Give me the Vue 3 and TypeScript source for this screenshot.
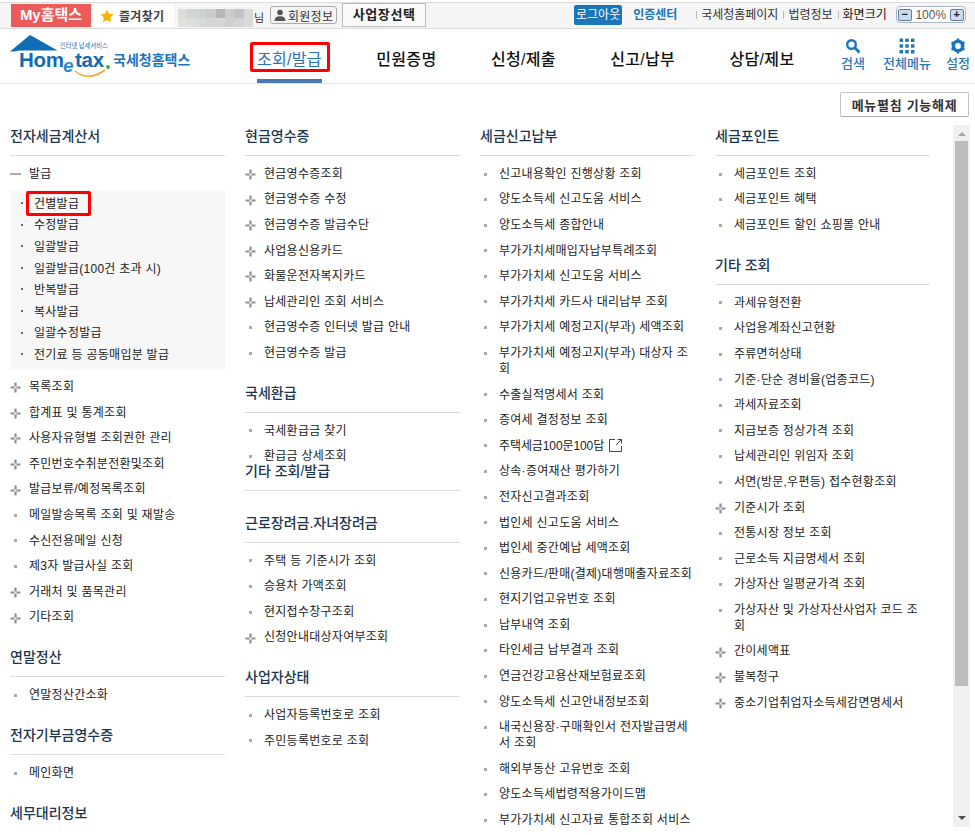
<script setup lang="ts">
type Kind = 'p' | 's' | 'm'
interface Item { t: string; k: Kind; ext?: boolean; sub?: string[] }
interface Sec { title: string; tight?: boolean; items: Item[] }

const s = (t: string): Item => ({ t, k: 's' })
const p = (t: string): Item => ({ t, k: 'p' })

const columns: Sec[][] = [
  [
    {
      title: '전자세금계산서',
      items: [
        { t: '발급', k: 'm', sub: ['건별발급', '수정발급', '일괄발급', '일괄발급(100건 초과 시)', '반복발급', '복사발급', '일괄수정발급', '전기료 등 공동매입분 발급'] },
        p('목록조회'), p('합계표 및 통계조회'), p('사용자유형별 조회권한 관리'), p('주민번호수취분전환및조회'), p('발급보류/예정목록조회'),
        s('메일발송목록 조회 및 재발송'), s('수신전용메일 신청'), s('제3자 발급사실 조회'), p('거래처 및 품목관리'), p('기타조회'),
      ],
    },
    { title: '연말정산', items: [s('연말정산간소화')] },
    { title: '전자기부금영수증', items: [s('메인화면')] },
    { title: '세무대리정보', items: [] },
  ],
  [
    {
      title: '현금영수증',
      items: [p('현금영수증조회'), p('현금영수증 수정'), p('현금영수증 발급수단'), p('사업용신용카드'), p('화물운전자복지카드'), p('납세관리인 조회 서비스'), s('현금영수증 인터넷 발급 안내'), s('현금영수증 발급')],
    },
    { title: '국세환급', items: [s('국세환급금 찾기'), s('환급금 상세조회')] },
    { title: '기타 조회/발급', tight: true, items: [] },
    { title: '근로장려금.자녀장려금', items: [s('주택 등 기준시가 조회'), s('승용차 가액조회'), s('현지접수창구조회'), p('신청안내대상자여부조회')] },
    { title: '사업자상태', items: [s('사업자등록번호로 조회'), s('주민등록번호로 조회')] },
  ],
  [
    {
      title: '세금신고납부',
      items: [
        s('신고내용확인 진행상황 조회'), s('양도소득세 신고도움 서비스'), s('양도소득세 종합안내'), s('부가가치세매입자납부특례조회'), s('부가가치세 신고도움 서비스'),
        s('부가가치세 카드사 대리납부 조회'), s('부가가치세 예정고지(부과) 세액조회'), s('부가가치세 예정고지(부과) 대상자 조회'), s('수출실적명세서 조회'), s('증여세 결정정보 조회'),
        { t: '주택세금100문100답', k: 's', ext: true }, s('상속·증여재산 평가하기'), s('전자신고결과조회'), s('법인세 신고도움 서비스'), s('법인세 중간예납 세액조회'),
        s('신용카드/판매(결제)대행매출자료조회'), s('현지기업고유번호 조회'), s('납부내역 조회'), s('타인세금 납부결과 조회'), s('연금건강고용산재보험료조회'),
        s('양도소득세 신고안내정보조회'), s('내국신용장·구매확인서 전자발급명세서 조회'), s('해외부동산 고유번호 조회'), s('양도소득세법령적용가이드맵'), s('부가가치세 신고자료 통합조회 서비스'),
      ],
    },
  ],
  [
    { title: '세금포인트', items: [s('세금포인트 조회'), s('세금포인트 혜택'), s('세금포인트 할인 쇼핑몰 안내')] },
    {
      title: '기타 조회',
      items: [
        s('과세유형전환'), s('사업용계좌신고현황'), s('주류면허상태'), s('기준·단순 경비율(업종코드)'), s('과세자료조회'), s('지급보증 정상가격 조회'), s('납세관리인 위임자 조회'),
        s('서면(방문,우편등) 접수현황조회'), p('기준시가 조회'), s('전통시장 정보 조회'), s('근로소득 지급명세서 조회'), s('가상자산 일평균가격 조회'), s('가상자산 및 가상자산사업자 코드 조회'),
        p('간이세액표'), p('불복청구'), p('중소기업취업자소득세감면명세서'),
      ],
    },
  ],
]

const navItems = ['조회/발급', '민원증명', '신청/제출', '신고/납부', '상담/제보']

const mosaic: string[] = [
  '#dedcd8', '#cfd4d4', '#d0d2d2', '#cacccc', '#b6b6b6', '#cfcdc8', '#c2c2c4', '#d8dadc',
  '#e4e0dc', '#dcdedd', '#d8dad9', '#d4d6d6', '#d6d6d6', '#d0cec8', '#d2d4d6', '#d8dadc',
]
</script>

<template>
  <div class="page">
    <div class="topbar">
      <div class="my">My홈택스</div>
      <div class="fav">
        <svg width="14" height="14" viewBox="0 0 24 24"><path d="M12 1l3.4 7.3 7.9 1-5.8 5.4 1.500 7.900L12 18.700l-7 3.900 1.500-7.900L.7 9.300l7.900-1z" fill="#f7b500" /></svg>
        <span>즐겨찾기</span>
      </div>
      <div class="mosaic">
        <i v-for="(c, i) in mosaic" :key="i" :style="{ background: c }"></i>
      </div>
      <span class="nim">님</span>
      <div class="member">
        <svg width="12" height="12" viewBox="0 0 12 12"><circle cx="6" cy="3.500" r="2.800" fill="#555" /><path d="M0.500 12c0-3.500 2.500-4.800 5.500-4.800s5.500 1.300 5.500 4.800z" fill="#555" /></svg>
        <span>회원정보</span>
      </div>
      <div class="biz">사업장선택</div>
      <div class="logout">로그아웃</div>
      <div class="cert">인증센터</div>
      <div class="tlink first">국세청홈페이지</div>
      <div class="tlink">법령정보</div>
      <div class="tlink dark">화면크기</div>
      <div class="zoomctl">
        <span class="zbtn">−</span>
        <span class="zval">100%</span>
        <span class="zbtn">+</span>
      </div>
    </div>

    <header class="header">
      <div class="logo">
        <svg width="182" height="48" viewBox="0 0 182 48">
          <path d="M0 19.500L20 3l27.500 15.500H9.500L4 19.500z" fill="#0f6db5" />
          <text x="50" y="16" class="lg-sub">인터넷 납세서비스</text>
          <text x="9" y="35" class="lg-big">Hom</text>
          <text x="53" y="40" class="lg-e">e</text>
          <text x="65" y="35" class="lg-big">tax</text>
          <circle cx="98" cy="35" r="1.900" fill="#3aa63a" />
          <path d="M65 39Q78 50 95 38" fill="none" stroke="#f3a733" stroke-width="1.600" />
          <text x="103" y="33" class="lg-name">국세청홈택스</text>
        </svg>
      </div>
      <nav class="nav">
        <div v-for="(n, i) in navItems" :key="n" class="nav-item" :class="{ active: i === 0 }">
          <span class="nav-label">{{ n }}</span>
        </div>
      </nav>
      <div class="tools">
        <div class="tool t1">
          <svg width="16" height="16" viewBox="0 0 16 16"><circle cx="6.500" cy="6.500" r="4.300" fill="none" stroke="#1a76b8" stroke-width="2.400" /><path d="M9.800 9.800l4.700 4.700" stroke="#1a76b8" stroke-width="2.800" /></svg>
          <span>검색</span>
        </div>
        <div class="tool t2">
          <svg width="16" height="16" viewBox="0 0 14 14" fill="#1a76b8">
            <rect x="0.500" y="0.500" width="3" height="3" /><rect x="5.500" y="0.500" width="3" height="3" /><rect x="10.500" y="0.500" width="3" height="3" />
            <rect x="0.500" y="5.500" width="3" height="3" /><rect x="5.500" y="5.500" width="3" height="3" /><rect x="10.500" y="5.500" width="3" height="3" />
            <rect x="0.500" y="10.500" width="3" height="3" /><rect x="5.500" y="10.500" width="3" height="3" /><rect x="10.500" y="10.500" width="3" height="3" />
          </svg>
          <span>전체메뉴</span>
        </div>
        <div class="tool t3">
          <svg width="16" height="16" viewBox="0 0 16 16"><circle cx="8" cy="8" r="4.700" fill="none" stroke="#1a76b8" stroke-width="3.600" /><path d="M8 0.500v3M8 12.500v3M1.500 4.300l2.600 1.500M11.900 10.200l2.600 1.500M1.500 11.700l2.600-1.500M11.900 5.800l2.600-1.500" stroke="#1a76b8" stroke-width="2.400" /></svg>
          <span>설정</span>
        </div>
      </div>
    </header>

    <div class="action-row">
      <button class="unfold">메뉴펼침 기능해제</button>
    </div>

    <div class="panel">
      <div class="cols">
        <div v-for="(col, ci) in columns" :key="ci" class="col">
          <section v-for="sec in col" :key="sec.title" class="sec" :class="{ tight: sec.tight }">
            <h3 class="sec-title">{{ sec.title }}</h3>
            <ul class="list">
              <li v-for="it in sec.items" :key="it.t" class="item" :class="{ 'has-ext': it.ext }">
                <svg v-if="it.k === 'p'" class="ico" width="11" height="11" viewBox="0 0 11 11">
                  <path d="M5.500 0.500v4M5.500 6.500v4M0.500 5.500h4M6.500 5.500h4" stroke="#8f8f8f" stroke-width="2.200" fill="none" />
                </svg>
                <span v-else-if="it.k === 's'" class="sq"></span>
                <span v-else class="minus"></span>
                <span>{{ it.t }}</span>
                <svg v-if="it.ext" class="ext" width="13" height="13" viewBox="0 0 13 13">
                  <path d="M6 .5H.5v12h12V7M7 6L12.500 .5M8.500 .5h4v4" fill="none" stroke="#444" />
                </svg>
                <ul v-if="it.sub" class="sub">
                  <li v-for="(x, xi) in it.sub" :key="x" class="sub-item" :class="{ marked: xi === 0 }">{{ x }}</li>
                </ul>
              </li>
            </ul>
          </section>
        </div>
      </div>
      <div class="scrollbar">
        <span class="arrow up"></span>
        <div class="thumb-track"><div class="thumb"></div></div>
        <span class="arrow down"></span>
      </div>
    </div>
  </div>
</template>

<style scoped>
.page {
  width: 975px;
  height: 835px;
  overflow: hidden;
  background: #fff;
  font-family: "Liberation Sans", "Noto Sans CJK KR", sans-serif;
  font-size: 12px;
  color: #222;
}
.topbar {
  margin-top: 2px;
  height: 24px;
  padding: 1px 0 0 11px;
  display: flex;
  align-items: flex-start;
  background: #f5f5f5;
  border-top: 1px solid #dcdcdc;
  border-bottom: 1px solid #dcdcdc;
  box-sizing: content-box;
}
.my {
  width: 80px;
  height: 23px;
  line-height: 22px;
  background: #ec5a5a;
  color: #fff;
  font-size: 15px;
  font-weight: 700;
  text-align: center;
}
.fav {
  width: 82px;
  height: 23px;
  margin-left: 1px;
  padding-left: 8px;
  box-sizing: border-box;
  background: #fff;
  display: flex;
  align-items: center;
  gap: 5px;
  color: #444;
  font-weight: 700;
  letter-spacing: 0.3px;
}
.mosaic {
  width: 75px;
  height: 18px;
  margin: 5px 0 0 4px;
  display: grid;
  grid-template-columns: repeat(8, 1fr);
  grid-template-rows: repeat(2, 1fr);
  filter: blur(0.5px);
}
.nim {
  margin: 6px 0 0 1px;
  line-height: 16px;
  font-size: 11px;
  color: #333;
}
.member {
  width: 67px;
  height: 18px;
  margin: 2px 0 0 6px;
  box-sizing: border-box;
  border: 1px solid #aaa;
  border-radius: 3px;
  background: #f4f4f4;
  display: flex;
  align-items: center;
  justify-content: center;
  gap: 2px;
  color: #333;
  letter-spacing: 0.3px;
}
.biz {
  width: 84px;
  height: 24px;
  margin: -1px 0 0 5px;
  box-sizing: border-box;
  border: 1px solid #bbb;
  background: #fafafa;
  font-size: 13px;
  font-weight: 700;
  line-height: 22px;
  text-align: center;
  letter-spacing: 0.6px;
  color: #222;
}
.logout {
  width: 48px;
  height: 20px;
  margin: 1px 0 0 148px;
  border-radius: 2px;
  background: #1a76b8;
  color: #fff;
  line-height: 20px;
  text-align: center;
}
.cert {
  margin: 1px 0 0 11px;
  width: 48px;
  line-height: 20px;
  color: #1a76b8;
  font-weight: 700;
  white-space: nowrap;
}
.tlink {
  margin: 1px 0 0 5px;
  padding-left: 5px;
  line-height: 20px;
  color: #333;
  white-space: nowrap;
  position: relative;
}
.tlink.first { margin-left: 15px; }
.tlink.dark { color: #111; }
.tlink::before {
  content: "";
  position: absolute;
  left: 0;
  top: 6px;
  width: 1px;
  height: 8px;
  background: #bbb;
}
.zoomctl {
  width: 70px;
  height: 17px;
  margin: 2px 0 0 9px;
  box-sizing: border-box;
  border: 1px solid #a9b6c6;
  border-radius: 4px;
  background: #fff;
  display: flex;
  align-items: center;
  justify-content: space-between;
  padding: 0 1px;
}
.zbtn {
  width: 14px;
  height: 12px;
  box-sizing: border-box;
  border: 1px solid #5d7ba3;
  border-radius: 2px;
  background: #c9dbee;
  font-size: 11px;
  font-weight: 700;
  line-height: 9px;
  text-align: center;
  color: #223;
}
.zval { color: #555; font-size: 12px; }

.header {
  height: 54px;
  display: flex;
  border-bottom: 1px solid #e3e3e3;
}
.logo {
  width: 230px;
  flex: none;
  padding: 3px 0 0 10px;
  box-sizing: border-box;
}
.lg-sub { font-size: 6.300px; fill: #1c75bc; font-family: "Noto Sans CJK KR", sans-serif; }
.lg-big { font-size: 20.500px; font-weight: 700; fill: #0f6db5; font-family: "Liberation Sans", sans-serif; letter-spacing: -0.3px; }
.lg-e { font-size: 19px; font-weight: 700; fill: #2a8ad0; font-family: "Liberation Sans", sans-serif; font-style: italic; }
.lg-name { font-size: 14px; font-weight: 700; fill: #1c75bc; font-family: "Noto Sans CJK KR", sans-serif; }
.nav {
  display: flex;
  gap: 54.500px;
  padding-left: 27px;
}
.nav-item {
  position: relative;
  display: flex;
  align-items: center;
  padding-top: 4px;
  box-sizing: border-box;
}
.nav-label {
  position: relative;
  font-size: 16px;
  font-weight: 500;
  color: #111;
  letter-spacing: 0.3px;
  white-space: nowrap;
}
.active .nav-label { color: #2a75b8; font-weight: 400; }
.active .nav-label::after {
  content: "";
  position: absolute;
  left: -7px;
  right: -8px;
  top: -4px;
  height: 30px;
  box-sizing: border-box;
  border: 3px solid #f00;
  border-radius: 2px;
}
.nav-item.active::before {
  content: "";
  position: absolute;
  left: 0;
  right: 0;
  bottom: 0;
  height: 4px;
  background: #4a79b8;
}
.tools {
  margin-left: auto;
  padding-right: 5px;
  display: flex;
}
.tool {
  display: flex;
  flex-direction: column;
  align-items: center;
  color: #2a75b8;
  font-size: 13px;
  font-weight: 500;
  white-space: nowrap;
  line-height: 18px;
  padding-top: 9px;
}
.tool svg { margin-bottom: 1px; }
.t1 { width: 24px; }
.t2 { width: 48px; margin-left: 18px; }
.t3 { width: 24px; margin-left: 15px; }

.action-row {
  height: 41px;
  display: flex;
  justify-content: flex-end;
  padding: 8px 6px 0 0;
  box-sizing: border-box;
}
.unfold {
  width: 129px;
  height: 25px;
  padding: 0;
  border: 1px solid #c4c4c4;
  border-bottom-color: #aaa;
  border-radius: 2px;
  background: #fff;
  font-family: inherit;
  font-size: 13px;
  font-weight: 700;
  color: #333;
  letter-spacing: 0.7px;
}
.panel {
  height: 702px;
  display: flex;
  width: 970px;
}
.cols {
  width: 953px;
  height: 702px;
  overflow: hidden;
  padding: 1px 0 0 10px;
  box-sizing: border-box;
  display: flex;
  gap: 20px;
}
.col { width: 215px; flex: none; }
.sec { margin-top: 17.200px; }
.sec:first-child { margin-top: 0; }
.sec.tight { margin-top: -8.500px; }
.sec-title {
  margin: 0;
  font-size: 14px;
  line-height: 20px;
  font-weight: 500;
  color: #1c3550;
  padding-bottom: 9px;
  border-bottom: 1px solid #dcdcdc;
}
.list {
  list-style: none;
  margin: 0;
  padding: 5px 0 0;
}
.item {
  position: relative;
  padding: 4.800px 2px 4.800px 19px;
  line-height: 16px;
  letter-spacing: 0.27px;
  word-break: break-all;
}
.has-ext { letter-spacing: -0.1px; }
.ico { position: absolute; left: 0; top: 8px; }
.sq { position: absolute; left: 4px; top: 11.500px; width: 3px; height: 3px; background: #aaa; }
.minus { position: absolute; left: 0; top: 12px; width: 11px; height: 2px; background: #aaa; }
.ext { margin-left: 5px; vertical-align: -2px; }
.sub {
  list-style: none;
  margin: 8px -2px -0.300px -19px;
  padding: 3.200px 0 4px 24px;
  background: #f7f7f7;
}
.sub-item {
  position: relative;
  padding: 2.800px 0;
  line-height: 16px;
}
.sub-item::before {
  content: "";
  position: absolute;
  left: -13px;
  top: 9px;
  width: 2px;
  height: 2px;
  background: #666;
}
.marked::after {
  content: "";
  position: absolute;
  left: -8px;
  top: -2px;
  width: 65px;
  height: 25px;
  box-sizing: border-box;
  border: 3px solid #f00;
  border-radius: 2px;
}
.scrollbar {
  width: 17px;
  height: 702px;
  background: #f0f0f0;
  display: flex;
  flex-direction: column;
  align-items: center;
}
.arrow { width: 0; height: 0; flex: none; border-left: 4px solid transparent; border-right: 4px solid transparent; }
.arrow.up { margin: 7px 0 5px; border-bottom: 4px solid #a5a5a5; }
.arrow.down { margin: 5px 0 7px; border-top: 4px solid #505050; }
.thumb-track { flex: 1; width: 100%; display: flex; justify-content: center; }
.thumb { width: 13px; height: 545px; background: #bdbdbd; }
</style>

<style>
html, body { background: #fff; }
</style>
